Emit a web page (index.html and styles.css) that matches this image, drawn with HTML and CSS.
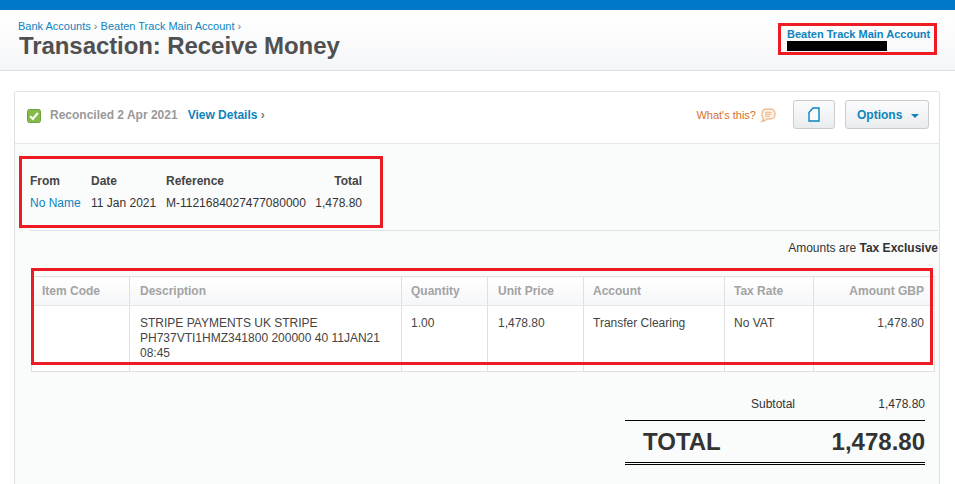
FILE: index.html
```html
<!DOCTYPE html>
<html lang="en">
<head>
<meta charset="utf-8">
<title>Transaction: Receive Money</title>
<link rel="stylesheet" href="styles.css">
</head>
<body>
<div class="topbar"></div>
<header class="page-head">
  <div>
    <nav class="crumbs"><a>Bank Accounts</a> <span class="sep">›</span> <a>Beaten Track Main Account</a> <span class="sep">›</span></nav>
    <h1>Transaction: Receive Money</h1>
  </div>
  <div class="acct">
    <a>Beaten Track Main Account</a>
    <div class="redacted"></div>
  </div>
</header>
<main class="card">
  <div class="card-head">
    <svg class="check" width="14" height="14" viewBox="0 0 14 14"><rect x="0.5" y="0.5" width="13" height="13" rx="2" fill="#86bb4a" stroke="#6aa33c"/><path d="M3.2 7.2l2.6 2.800 5-6" fill="none" stroke="#fff" stroke-width="2"/></svg>
    <span class="recon">Reconciled 2 Apr 2021</span>
    <a class="view">View Details <span class="sep">›</span></a>
    <span class="spacer"></span>
    <span class="whats">What's this?</span>
    <svg class="bubble" width="16" height="15" viewBox="0 0 16 15"><path d="M6 1.200h5a4 4 0 0 1 4 4v1.600a4 4 0 0 1-4 4H7c-1.200 1.500-3 2.300-5 2.600 1-.8 1.500-1.800 1.500-3A4 4 0 0 1 2 6.800V5.200a4 4 0 0 1 4-4z" fill="#fdf4e9" stroke="#f0b27e" stroke-width="1.200"/><path d="M5 4.300h6.500M5 6.200h6.500M5 8.100h5" stroke="#f0b27e" stroke-width="1"/></svg>
    <button class="btn btn-icon"><svg width="12" height="15" viewBox="0 0 12 15"><path d="M1 14V5.500L5 1h6v13z" fill="#f8fbfc" stroke="#0a83bd" stroke-width="1.400"/></svg></button>
    <button class="btn btn-opt">Options<span class="caret"></span></button>
  </div>
  <div class="card-body">
    <table class="summary">
      <tr><th>From</th><th>Date</th><th>Reference</th><th class="num">Total</th></tr>
      <tr><td><a>No Name</a></td><td>11 Jan 2021</td><td>M-1121684027477080000</td><td class="num">1,478.80</td></tr>
    </table>
    <div class="tax-note">Amounts are <b>Tax Exclusive</b></div>
    <table class="lines">
      <colgroup><col class="c1"><col class="c2"><col class="c3"><col class="c4"><col class="c5"><col class="c6"><col class="c7"></colgroup>
      <thead><tr><th>Item Code</th><th>Description</th><th class="tight">Quantity</th><th>Unit Price</th><th class="tight">Account</th><th class="tight">Tax Rate</th><th class="num">Amount GBP</th></tr></thead>
      <tbody><tr><td></td><td>STRIPE PAYMENTS UK STRIPE PH737VTI1HMZ341800 200000 40 11JAN21 08:45</td><td class="tight">1.00</td><td>1,478.80</td><td class="tight">Transfer Clearing</td><td class="tight">No VAT</td><td class="num">1,478.80</td></tr></tbody>
    </table>
    <div class="totals">
      <div class="subtotal"><span class="sub-label">Subtotal</span><span>1,478.80</span></div>
      <div class="grand"><span>TOTAL</span><span>1,478.80</span></div>
    </div>
  </div>
</main>
<div class="mark mark-acct"></div>
<div class="mark mark-summary"></div>
<div class="mark mark-lines"></div>
</body>
</html>
```
FILE: styles.css
```css
* { box-sizing: border-box; }
html, body { margin: 0; height: 484px; overflow: hidden; }
body { position: relative; background: #fff; font: 12px/15px "Liberation Sans", Arial, sans-serif; color: #333; }
a { color: #0e83bd; }
.topbar { height: 10px; background: #0078c8; }
.page-head { height: 61px; display: flex; justify-content: space-between; padding: 9px 25px 0 18px; background: linear-gradient(#fff, #f5f6f8); border-bottom: 1px solid #dcdfe3; }
.crumbs { font-size: 11px; line-height: 15px; color: #777; }
.crumbs .sep { color: #777; }
h1 { margin: -2px 0 0 1px; font-size: 24px; line-height: 28px; font-weight: bold; color: #505050; letter-spacing: -0.08px; }
.acct { padding-top: 8px; width: 143px; font-weight: bold; font-size: 11px; line-height: 14px; white-space: nowrap; }
.redacted { width: 100px; height: 10px; background: #000; }
.card { margin: 20px 14px 0; width: 926px; height: 393px; overflow: hidden; border: 1px solid #dfe1e3; border-bottom: 0; border-radius: 3px 3px 0 0; background: #fafbfb; }
.card-head { height: 52px; display: flex; align-items: center; padding: 0 10px 4px 12px; background: #fff; border-bottom: 1px solid #e6e7e8; }
.check { margin-right: 9px; }
.recon { font-weight: bold; color: #999; }
.view { margin-left: 10px; font-weight: bold; }
.view .sep { color: #777; }
.spacer { flex: 1; }
.whats { font-size: 11px; color: #d8702a; }
.bubble { margin-left: 4px; }
.btn { height: 29px; margin-bottom: 2px; border: 1px solid #c8ccd0; border-radius: 3px; background: linear-gradient(#fbfcfc, #e9ecee); color: #0e83bd; font: bold 12px "Liberation Sans", Arial, sans-serif; }
.btn-icon { width: 42px; margin-left: 17px; padding: 0; display: flex; align-items: center; justify-content: center; }
.btn-opt { width: 84px; margin-left: 10px; padding: 0 0 0 11px; display: flex; align-items: center; }
.caret { margin: 2px 0 0 9px; border: 4px solid transparent; border-top-color: #0e83bd; border-bottom: 0; }
.card-body { position: relative; padding: 30px 1px 0 15px; }
.summary { border-collapse: collapse; width: 908px; border-bottom: 1px solid #e0e1e2; height: 53px; }
.summary th, .summary td { padding: 0 10px 0 0; text-align: left; white-space: nowrap; vertical-align: top; height: 22px; }
.summary th { font-weight: bold; color: #444; }
.summary tr + tr td { color: #333; }
.summary tr { display: flex; }
.summary tr + tr { padding-bottom: 12px; }
.summary th:nth-child(1), .summary td:nth-child(1) { width: 61px; }
.summary th:nth-child(2), .summary td:nth-child(2) { width: 75px; }
.summary th:nth-child(3), .summary td:nth-child(3) { width: 150px; }
.summary th:nth-child(4), .summary td:nth-child(4) { width: 46px; padding: 0; text-align: right; direction: rtl; }
.tax-note { text-align: right; margin: 10px 0 20px 0; }
.tax-note b { color: #333; }
.lines { border-collapse: collapse; table-layout: fixed; width: 903px; margin-left: 1px; border: 1px solid #e0e0e0; }
.c1 { width: 98px; } .c2 { width: 272px; } .c3 { width: 86px; } .c4 { width: 96px; } .c5 { width: 141px; } .c6 { width: 89px; } .c7 { width: 121px; }
.lines th, .lines td { border-left: 1px solid #e0e0e0; padding: 0 10px; text-align: left; }
.lines th { height: 29px; font-weight: bold; color: #a3a3a3; background: linear-gradient(#fff, #f5f6f8); border-bottom: 1px solid #e6e6e6; }
.lines td { height: 66px; padding-top: 10px; vertical-align: top; background: #fff; color: #444; }
.lines .num { text-align: right; }
.lines .tight { padding-left: 9px; }
.totals { margin: 25px 0 0 595px; width: 300px; }
.subtotal { display: flex; justify-content: space-between; height: 23px; }
.sub-label { margin-left: 126px; }
.grand { display: flex; justify-content: space-between; height: 45px; padding: 7px 0 0 18px; border-top: 1px solid #000; border-bottom: 3px double #000; font-size: 24px; line-height: 28px; font-weight: bold; }
.mark { position: absolute; border: 3px solid #ed1c24; }
.mark-acct { left: 778px; top: 23px; width: 159px; height: 32px; }
.mark-summary { left: 19px; top: 156px; width: 364px; height: 72px; }
.mark-lines { left: 31px; top: 268px; width: 902px; height: 97px; }
```
